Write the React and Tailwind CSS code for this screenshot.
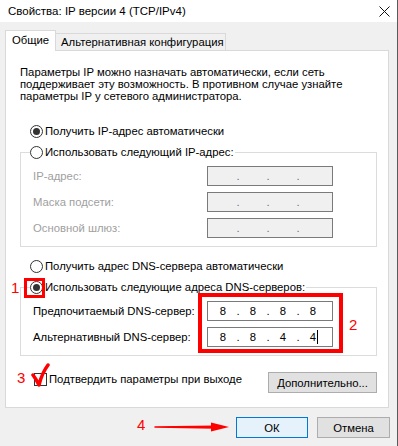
function Radio({ checked }) {
  return (
    <span className="w-[13px] h-[13px] rounded-full border border-[#333333] bg-white flex items-center justify-center shrink-0">
      {checked && <span className="w-[7px] h-[7px] rounded-full bg-[#333333]" />}
    </span>
  )
}

function IpBox({ parts, disabled, cursor }) {
  const segs = parts || ['', '', '', '']
  return (
    <div
      className={`w-[126px] h-[20px] border flex items-center pl-[2px] ${
        disabled ? 'bg-[#f0f0f0] border-[#7a7a7a] text-[#6d6d8d]' : 'bg-white border-[#7a7a7a] text-black'
      }`}
    >
      {segs.map((s, i) => (
        <div key={i} className="flex items-center">
          <span className="w-[26px] h-[14px] text-center leading-[14px] relative">
            {s}
            {cursor && i === 3 && (
              <span className="absolute right-[8px] top-[0px] w-px h-[14px] bg-black" />
            )}
          </span>
          {i < 3 && <span className="w-[4px] text-center leading-[14px]">.</span>}
        </div>
      ))}
    </div>
  )
}

function Row({ label, children, disabled }) {
  return (
    <div className="flex items-center h-[20px]">
      <span className={`w-[174px] whitespace-nowrap ${disabled ? 'text-[#a0a0a0]' : 'text-black'}`}>{label}</span>
      {children}
    </div>
  )
}

export default function App() {
  return (
    <div className="relative w-[398px] h-[446px] bg-[#f0f0f0] border-r border-[#5a5a5a] overflow-hidden text-[11.3px] leading-[14px] text-black font-['Segoe_UI','Liberation_Sans',sans-serif]">
      {/* title bar */}
      <div className="h-[22px] bg-white flex items-center justify-between pl-[8px] pr-[7px]">
        <span className="text-[11.5px]">Свойства: IP версии 4 (TCP/IPv4)</span>
        <svg width="11" height="11" viewBox="0 0 11 11" className="mt-[1px]">
          <path d="M0.5 0.5 L10.5 10.5 M10.5 0.5 L0.5 10.5" stroke="#111" strokeWidth="1" />
        </svg>
      </div>

      {/* tabs */}
      <div className="mt-[8px] pl-[5px] flex items-end h-[20px]">
        <div className="relative z-10 h-[21px] -mb-px w-[51px] bg-white border border-b-0 border-[#d9d9d9] flex items-center justify-center pb-[2px]">
          Общие
        </div>
        <div className="h-[17px] w-[170px] bg-[#f0f0f0] border border-l-0 border-b-0 border-[#d9d9d9] flex items-center pl-[5px] whitespace-nowrap">
          Альтернативная конфигурация
        </div>
      </div>

      {/* panel */}
      <div className="ml-[5px] w-[384px] h-[358px] bg-white border border-[#d9d9d9] flex flex-col">
        <p className="pl-[14px] pt-[15px] leading-[12px] whitespace-nowrap">
          Параметры IP можно назначать автоматически, если сеть
          <br />
          поддерживает эту возможность. В противном случае узнайте
          <br />
          параметры IP у сетевого администратора.
        </p>

        <div className="mt-[22px] ml-[24px] flex items-center gap-[2px] h-[14px]">
          <Radio checked />
          <span>Получить IP-адрес автоматически</span>
        </div>

        <fieldset className="mt-[7px] ml-[14px] w-[357px] border border-[#dcdcdc] pb-[8px]">
          <legend className="ml-[9px] flex items-center gap-[2px] h-[14px] pr-[1px]">
            <Radio />
            <span>Использовать следующий IP-адрес:</span>
          </legend>
          <div className="pl-[12px] pt-[7px] flex flex-col gap-[6px]">
            <Row label="IP-адрес:" disabled>
              <IpBox disabled />
            </Row>
            <Row label="Маска подсети:" disabled>
              <IpBox disabled />
            </Row>
            <Row label="Основной шлюз:" disabled>
              <IpBox disabled />
            </Row>
          </div>
        </fieldset>

        <div className="mt-[12px] ml-[24px] flex items-center gap-[2px] h-[14px]">
          <Radio />
          <span>Получить адрес DNS-сервера автоматически</span>
        </div>

        <fieldset className="mt-[7px] ml-[14px] w-[357px] border border-[#dcdcdc] pb-[8px]">
          <legend className="ml-[9px] flex items-center gap-[2px] h-[14px] pr-[1px]">
            <Radio checked />
            <span>Использовать следующие адреса DNS-серверов:</span>
          </legend>
          <div className="pl-[12px] pt-[7px] flex flex-col gap-[6px]">
            <Row label="Предпочитаемый DNS-сервер:">
              <IpBox parts={['8', '8', '8', '8']} />
            </Row>
            <Row label="Альтернативный DNS-сервер:">
              <IpBox parts={['8', '8', '4', '4']} cursor />
            </Row>
          </div>
        </fieldset>

        <div className="mt-[16px] ml-[14px] w-[357px] flex items-start justify-between">
          <div className="flex items-center gap-[2px] ml-[14px]">
            <span className="w-[13px] h-[13px] border border-[#333333] bg-white shrink-0" />
            <span>Подтвердить параметры при выходе</span>
          </div>
          <button className="w-[109px] h-[21px] bg-[#e1e1e1] border border-[#adadad] flex items-center justify-center">
            Дополнительно...
          </button>
        </div>
      </div>

      {/* dialog buttons */}
      <div className="mt-[9px] flex justify-end gap-[9px] pr-[7px]">
        <button className="w-[72px] h-[21px] bg-[#e5f1fb] border border-[#0078d7] flex items-center justify-center">
          ОК
        </button>
        <button className="w-[73px] h-[21px] bg-[#e1e1e1] border border-[#adadad] flex items-center justify-center">
          Отмена
        </button>
      </div>

      {/* red annotations */}
      <div className="absolute left-[24px] top-[278px] w-[21px] h-[20px] border-[3px] border-[#ff0000]" />
      <div className="absolute left-[198px] top-[293px] w-[145px] h-[60px] border-[4px] border-[#ff0000]" />
      <span className="absolute left-[11px] top-[280px] text-[15px] leading-[16px] text-[#ff0000] font-['Liberation_Sans',sans-serif]">1</span>
      <span className="absolute left-[349px] top-[317px] text-[15px] leading-[16px] text-[#ff0000] font-['Liberation_Sans',sans-serif]">2</span>
      <span className="absolute left-[17px] top-[370px] text-[15px] leading-[16px] text-[#ff0000] font-['Liberation_Sans',sans-serif]">3</span>
      <span className="absolute left-[137px] top-[417px] text-[15px] leading-[16px] text-[#ff0000] font-['Liberation_Sans',sans-serif]">4</span>
      <svg className="absolute left-[31px] top-[363px]" width="20" height="25" viewBox="0 0 20 25">
        <path d="M2 12 Q5 16 8 22 Q11 10 17 2" fill="none" stroke="#ff0000" strokeWidth="3.5" strokeLinecap="round" strokeLinejoin="round" />
      </svg>
      <svg className="absolute left-[153px] top-[421px]" width="78" height="12" viewBox="0 0 78 12">
        <path d="M2 6 L62 5.2 L62 7 Z" fill="#ff0000" stroke="#ff0000" strokeWidth="1.5" strokeLinejoin="round" />
        <path d="M58 1.5 L76 6 L58 10.5 Z" fill="#ff0000" />
      </svg>
    </div>
  )
}
